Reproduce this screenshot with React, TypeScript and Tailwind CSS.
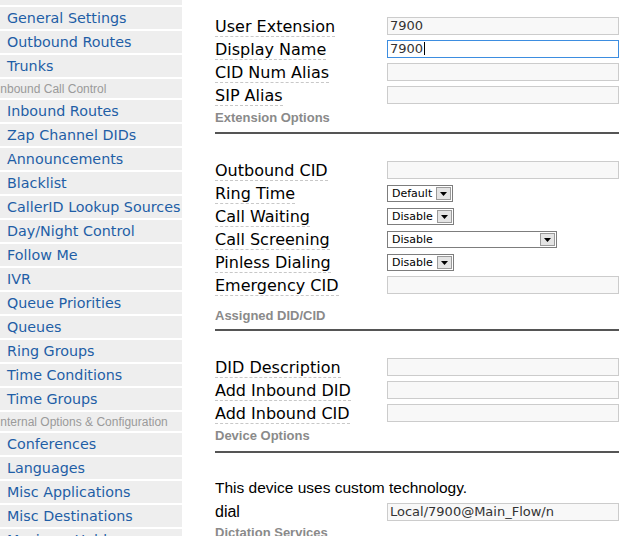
import React from 'react'

type NavEntry = { label: string; header?: boolean }

const nav: NavEntry[] = [
  { label: '' },
  { label: 'General Settings' },
  { label: 'Outbound Routes' },
  { label: 'Trunks' },
  { label: 'Inbound Call Control', header: true },
  { label: 'Inbound Routes' },
  { label: 'Zap Channel DIDs' },
  { label: 'Announcements' },
  { label: 'Blacklist' },
  { label: 'CallerID Lookup Sources' },
  { label: 'Day/Night Control' },
  { label: 'Follow Me' },
  { label: 'IVR' },
  { label: 'Queue Priorities' },
  { label: 'Queues' },
  { label: 'Ring Groups' },
  { label: 'Time Conditions' },
  { label: 'Time Groups' },
  { label: 'Internal Options & Configuration', header: true },
  { label: 'Conferences' },
  { label: 'Languages' },
  { label: 'Misc Applications' },
  { label: 'Misc Destinations' },
  { label: 'Music on Hold' },
]

const verdana = "font-['DejaVu_Sans',Verdana,sans-serif]"
const arial = "font-['Liberation_Sans',Arial,sans-serif]"

const Label = ({ children }: { children: React.ReactNode }) => (
  <div className="w-[172px] shrink-0">
    <span className={`${verdana} text-[16px] leading-[19px] text-black border-b border-dashed border-[#c8c8c8] inline-block`}>
      {children}
    </span>
  </div>
)

const TextInput = ({ value = '', focused = false }: { value?: string; focused?: boolean }) => (
  <div
    className={`w-[232px] h-[18px] flex items-center pl-[2px] ${verdana} text-[13px] text-[#333] ${
      focused ? 'bg-white border border-[#3d8de0]' : 'bg-[#f8f8f8] border border-[#cccccc]'
    }`}
  >
    {value}
    {focused && <span className="w-px h-[13px] bg-black ml-px" />}
  </div>
)

const Select = ({ value, width }: { value: string; width: string }) => (
  <div className={`${width} h-[17px] mt-[2px] bg-white border border-[#7d7d7d] flex items-center justify-between pl-[4px] pr-[1px]`}>
    <span className={`${verdana} text-[11px] text-black leading-none`}>{value}</span>
    <span className="w-[15px] h-[13px] bg-[#e4e4e4] border border-[#9a9a9a] flex items-center justify-center">
      <svg width="7" height="4" viewBox="0 0 7 4">
        <polygon points="0,0 7,0 3.5,4" fill="#000" />
      </svg>
    </span>
  </div>
)

const Row = ({ label, children }: { label: string; children: React.ReactNode }) => (
  <div className="flex items-center h-[23px]">
    <Label>{label}</Label>
    {children}
  </div>
)

const SectionHeader = ({ children, className = '' }: { children: React.ReactNode; className?: string }) => (
  <div className={`${arial} text-[13px] leading-[14px] font-bold text-[#8a8a8a] ${className}`}>{children}</div>
)

const Rule = ({ className = '' }: { className?: string }) => <div className={`h-[2px] bg-[#555] ${className}`} />

const App = () => {
  return (
    <div className="w-[628px] h-[536px] overflow-hidden flex bg-white">
      {/* Sidebar */}
      <div className="w-[182px] shrink-0 flex flex-col gap-[2px] -mt-[17px]">
        {nav.map((item, i) =>
          item.header ? (
            <div
              key={i}
              className={`h-[19px] shrink-0 bg-[#eeeeee] flex items-center -ml-[3px] ${arial} text-[12px] text-[#9a9a9a] whitespace-nowrap`}
            >
              {item.label}
            </div>
          ) : (
            <div
              key={i}
              className={`h-[22px] shrink-0 bg-[#eeeeee] flex items-center pl-[7px] pt-[1px] ${verdana} text-[14.3px] text-[#1f5ea6] whitespace-nowrap`}
            >
              {item.label}
            </div>
          )
        )}
      </div>

      {/* Main form */}
      <div className="flex-1 pl-[33px] pr-[9px] pt-[14px]">
        <Row label="User Extension">
          <TextInput value="7900" />
        </Row>
        <Row label="Display Name">
          <TextInput value="7900" focused />
        </Row>
        <Row label="CID Num Alias">
          <TextInput />
        </Row>
        <Row label="SIP Alias">
          <TextInput />
        </Row>
        <SectionHeader className="pt-[5px]">Extension Options</SectionHeader>
        <Rule className="mt-[7px]" />

        <div className="mt-[24px]">
          <Row label="Outbound CID">
            <TextInput />
          </Row>
          <Row label="Ring Time">
            <Select value="Default" width="w-[66px]" />
          </Row>
          <Row label="Call Waiting">
            <Select value="Disable" width="w-[67px]" />
          </Row>
          <Row label="Call Screening">
            <Select value="Disable" width="w-[170px]" />
          </Row>
          <Row label="Pinless Dialing">
            <Select value="Disable" width="w-[67px]" />
          </Row>
          <Row label="Emergency CID">
            <TextInput />
          </Row>
        </div>
        <SectionHeader className="pt-[13px]">Assigned DID/CID</SectionHeader>
        <Rule className="mt-[6px]" />

        <div className="mt-[24px]">
          <Row label="DID Description">
            <TextInput />
          </Row>
          <Row label="Add Inbound DID">
            <TextInput />
          </Row>
          <Row label="Add Inbound CID">
            <TextInput />
          </Row>
        </div>
        <SectionHeader className="pt-[5px]">Device Options</SectionHeader>
        <Rule className="mt-[8px]" />

        <div className={`mt-[26px] ${arial} text-[15.5px] leading-[18px] text-black`}>
          This device uses custom technology.
        </div>
        <div className="flex items-center h-[23px] mt-[3px]">
          <div className={`w-[172px] shrink-0 ${arial} text-[16px] text-black`}>dial</div>
          <TextInput value="Local/7900@Main_Flow/n" />
        </div>
        <SectionHeader className="pt-[3px]">Dictation Services</SectionHeader>
      </div>
    </div>
  )
}

export default App
